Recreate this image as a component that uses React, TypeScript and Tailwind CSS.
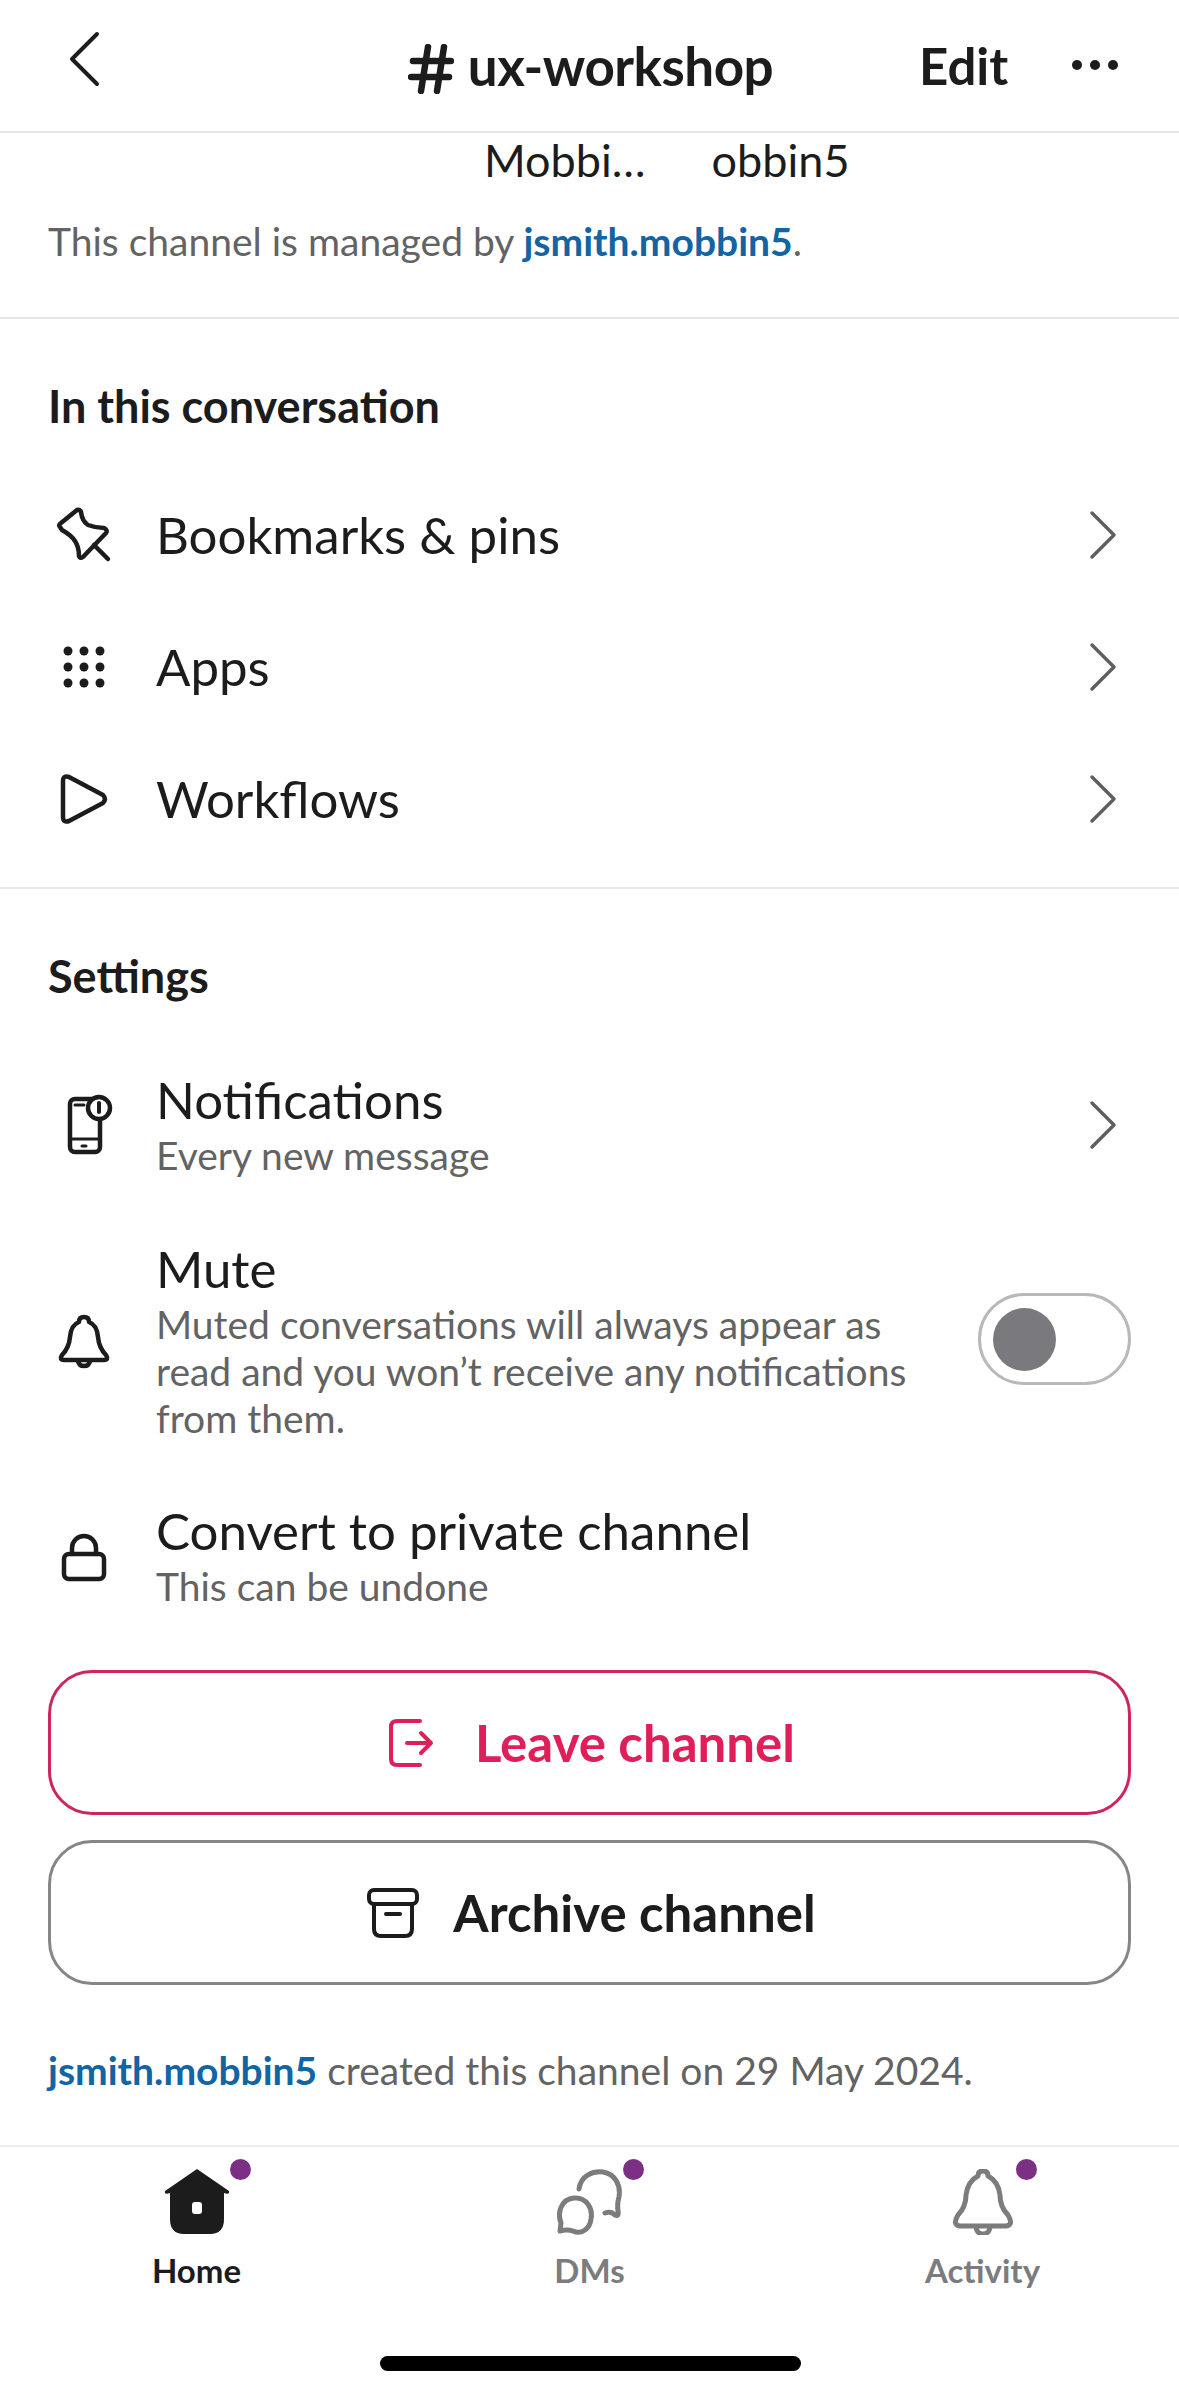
function Chevron() {
  return (
    <svg width="30" height="50" viewBox="0 0 30 50" fill="none" stroke="#5f5f60" strokeWidth="3.5" strokeLinecap="round" strokeLinejoin="round">
      <path d="M3 3 L25 25 L3 47" />
    </svg>
  );
}

function Icon({ children }: { children: React.ReactNode }) {
  return (
    <svg width="72" height="72" viewBox="0 0 72 72" fill="none" stroke="#1d1c1d" strokeWidth="4.5" strokeLinecap="round" strokeLinejoin="round" className="shrink-0">
      {children}
    </svg>
  );
}

function LinkRow({ label, icon }: { label: string; icon: React.ReactNode }) {
  return (
    <div className="h-[132px] flex items-center pl-12 pr-[60px]">
      {icon}
      <span className="ml-[36px] flex-1 text-[51px] leading-[56px] text-[#1d1c1d]">{label}</span>
      <Chevron />
    </div>
  );
}

function Badge() {
  return <span className="absolute top-[-10px] right-[-21px] w-[21px] h-[21px] rounded-full bg-[#7c3085]" />;
}

export default function App() {
  return (
    <div className="w-full h-screen flex flex-col bg-white overflow-hidden font-['Lato','sans-serif'] text-[#1d1c1d]">
      {/* top bar */}
      <header className="h-[133px] shrink-0 relative border-b-2 border-[#e6e6e6] flex justify-center pt-[38px]">
        <svg width="34" height="56" viewBox="0 0 34 56" fill="none" stroke="#1d1c1d" strokeWidth="4" strokeLinecap="round" strokeLinejoin="round" className="absolute left-[67px] top-[31px]">
          <path d="M30 3 L5 28 L30 53" />
        </svg>
        <div className="flex items-center h-[56px] pl-[2px] font-bold text-[53px] leading-[56px] tracking-[-0.5px]">
          <svg width="46" height="50" viewBox="0 0 46 50" fill="none" stroke="#1d1c1d" strokeWidth="6.5" strokeLinecap="round" className="mr-[14px] mt-[6px]">
            <path d="M20 3 L13 47 M36 3 L29 47 M5 17 H43 M3 33 H41" />
          </svg>
          <span>ux-workshop</span>
        </div>
        <span className="absolute left-[919px] top-[38px] font-bold text-[51px] leading-[56px]">Edit</span>
        <div className="absolute left-[1072px] top-[60px] flex gap-[8px]">
          <span className="w-[10px] h-[10px] rounded-full bg-[#1d1c1d]" />
          <span className="w-[10px] h-[10px] rounded-full bg-[#1d1c1d]" />
          <span className="w-[10px] h-[10px] rounded-full bg-[#1d1c1d]" />
        </div>
      </header>

      {/* managed by */}
      <section className="h-[186px] shrink-0 border-b-2 border-[#e6e6e6]">
        <div className="flex pl-[484px] gap-[66px] text-[45px] leading-[50px] pt-[2px]">
          <span>Mobbi…</span>
          <span>obbin5</span>
        </div>
        <p className="pl-12 mt-[32px] text-[39px] leading-[48px] text-[#636363]">
          This channel is managed by <span className="font-bold text-[#1264a3]">jsmith.mobbin5</span>.
        </p>
      </section>

      {/* conversation */}
      <section className="h-[570px] shrink-0 border-b-2 border-[#e6e6e6]">
        <h2 className="pl-12 pt-[63px] font-bold text-[45px] leading-[48px]">In this conversation</h2>
        <div className="mt-[39px]">
          <LinkRow
            label="Bookmarks & pins"
            icon={
              <Icon>
                <path d="M12 28 Q10 26 13 24 L29 11 Q32 10 33 13 Q34 22 40 26 Q48 29 56 29 Q60 31 58 34 L35 58 Q32 60 31 57 Q31 48 27 42 Q23 36 14 31 Z" />
                <path d="M46 46 L60 60" />
              </Icon>
            }
          />
          <LinkRow
            label="Apps"
            icon={
              <Icon>
                <g fill="#1d1c1d" stroke="none">
                  <circle cx="20" cy="20" r="4.5" />
                  <circle cx="36" cy="20" r="4.5" />
                  <circle cx="52" cy="20" r="4.5" />
                  <circle cx="20" cy="36" r="4.5" />
                  <circle cx="36" cy="36" r="4.5" />
                  <circle cx="52" cy="36" r="4.5" />
                  <circle cx="20" cy="52" r="4.5" />
                  <circle cx="36" cy="52" r="4.5" />
                  <circle cx="52" cy="52" r="4.5" />
                </g>
              </Icon>
            }
          />
          <LinkRow
            label="Workflows"
            icon={
              <Icon>
                <path d="M15 18 Q15 12 21 14 L55 32 Q59 36 55 40 L21 58 Q15 60 15 54 Z" />
              </Icon>
            }
          />
        </div>
      </section>

      {/* settings */}
      <section className="flex-1 flex flex-col">
        <h2 className="pl-12 pt-[63px] font-bold text-[45px] leading-[48px]">Settings</h2>

        <div className="mt-[72px] flex items-center pl-12 pr-[60px]">
          <Icon>
            <rect x="22" y="9" width="30" height="53" rx="5" />
            <path d="M22 49 H52" strokeWidth="3" />
            <path d="M34 56 H38" strokeWidth="3" />
            <path d="M27 15 H36" strokeWidth="3" />
            <circle cx="51" cy="18" r="11" fill="#fff" />
            <path d="M51 13 V22" strokeWidth="4" />
          </Icon>
          <div className="ml-[36px] flex-1">
            <div className="text-[51px] leading-[56px]">Notifications</div>
            <div className="mt-[4px] text-[39px] leading-[47px] text-[#636363]">Every new message</div>
          </div>
          <div className="mb-[2px]">
            <Chevron />
          </div>
        </div>

        <div className="mt-[62px] flex items-center pl-12 pr-12">
          <Icon>
            <path d="M31 16 Q31 11 36 11 Q41 11 41 16 Q49 19 50 31 Q51 42 58 49 Q61 54 56 54 L16 54 Q11 54 14 49 Q21 42 22 31 Q23 19 31 16 Z" />
            <path d="M30 55 Q31 60 36 60 Q41 60 42 55" />
          </Icon>
          <div className="ml-[36px] w-[760px]">
            <div className="text-[51px] leading-[56px]">Mute</div>
            <div className="mt-[4px] text-[39px] leading-[47px] text-[#636363]">
              Muted conversations will always appear as read and you won’t receive any notifications from them.
            </div>
          </div>
          <div className="ml-auto mb-[5px] w-[153px] h-[92px] rounded-full border-[3px] border-[#b8b8b8] flex items-center pl-[12px]">
            <span className="w-[63px] h-[63px] rounded-full bg-[#7a7a7e]" />
          </div>
        </div>

        <div className="mt-[61px] flex items-center pl-12 pr-12">
          <Icon>
            <rect x="16" y="33" width="40" height="25" rx="5" />
            <path d="M24 33 V27 A12 12 0 0 1 48 27 V33" />
          </Icon>
          <div className="ml-[36px] flex-1">
            <div className="text-[51px] leading-[56px]">Convert to private channel</div>
            <div className="mt-[4px] text-[39px] leading-[47px] text-[#636363]">This can be undone</div>
          </div>
        </div>

        <div className="mt-[60px] mx-12 flex flex-col gap-[25px]">
          <button className="h-[145px] pl-[4px] rounded-[44px] border-[3px] border-[#d0245f] flex items-center justify-center gap-[41px] text-[#e01e5a] font-bold text-[51px] leading-[56px]">
            <svg width="46" height="50" viewBox="0 0 46 50" fill="none" stroke="#e01e5a" strokeWidth="4" strokeLinecap="round" strokeLinejoin="round">
              <path d="M32 3 H9 Q3 3 3 9 V41 Q3 47 9 47 H32" />
              <path d="M19 25 H43 M33 15 L43 25 L33 35" />
            </svg>
            Leave channel
          </button>
          <button className="h-[145px] pl-[4px] rounded-[44px] border-[3px] border-[#868686] flex items-center justify-center gap-[34px] font-bold text-[51px] leading-[56px]">
            <svg width="52" height="52" viewBox="0 0 52 52" fill="none" stroke="#1d1c1d" strokeWidth="4" strokeLinecap="round" strokeLinejoin="round">
              <rect x="2" y="3" width="48" height="14" rx="5" />
              <path d="M7 17 V42 Q7 49 14 49 H38 Q45 49 45 42 V17" />
              <path d="M19 27 H33" />
            </svg>
            Archive channel
          </button>
        </div>

        <p className="pl-12 mt-[61px] text-[39px] leading-[48px] text-[#636363]">
          <span className="font-bold text-[#1264a3]">jsmith.mobbin5</span> created this channel on 29 May 2024.
        </p>
      </section>

      {/* tab bar */}
      <nav className="h-[251px] shrink-0 relative border-t-2 border-[#eeeeee] grid grid-cols-3 pt-[22px]">
        <div className="flex flex-col items-center">
          <div className="relative">
            <svg width="66" height="66" viewBox="0 0 66 66" className="block">
              <path d="M33 0 L65 22 Q66 26 60 24 V50 Q60 65 46 65 H20 Q6 65 6 50 V24 Q0 26 1 22 Z" fill="#1d1c1d" />
              <rect x="28" y="33" width="10" height="12" rx="3" fill="#fff" />
            </svg>
            <Badge />
          </div>
          <span className="mt-[15px] font-bold text-[33px] leading-[40px]">Home</span>
        </div>
        <div className="flex flex-col items-center">
          <div className="relative">
            <svg width="66" height="66" viewBox="0 0 66 66" fill="none" stroke="#7c7c7f" strokeWidth="5" strokeLinecap="round" strokeLinejoin="round" className="block">
              <path d="M22 20 C24 6 36 2 46 3 C58 5 64 16 62 28 C61 32 60 34 61 42 Q62 48 58 46 Q54 42 48 44" />
              <path d="M3 62 L4 54 C0 44 4 30 17 29 C30 28 36 40 34 50 C33 60 24 66 16 62 Q10 60 3 62 Z" />
            </svg>
            <Badge />
          </div>
          <span className="mt-[15px] font-bold text-[33px] leading-[40px] text-[#7c7c7f]">DMs</span>
        </div>
        <div className="flex flex-col items-center">
          <div className="relative">
            <svg width="66" height="66" viewBox="0 0 66 66" fill="none" stroke="#7c7c7f" strokeWidth="5" strokeLinecap="round" strokeLinejoin="round" className="block">
              <path d="M28 7 Q28 2 33 2 Q38 2 38 7 Q48 12 50 26 Q50 38 58 46 Q64 56 56 57 H10 Q2 56 8 46 Q16 38 16 26 Q18 12 28 7 Z" />
              <path d="M26 58 Q27 65 33 65 Q39 65 40 58" />
            </svg>
            <Badge />
          </div>
          <span className="mt-[15px] font-bold text-[33px] leading-[40px] text-[#7c7c7f]">Activity</span>
        </div>
        <span className="absolute left-[380px] top-[209px] w-[421px] h-[15px] rounded-full bg-black" />
      </nav>
    </div>
  );
}
